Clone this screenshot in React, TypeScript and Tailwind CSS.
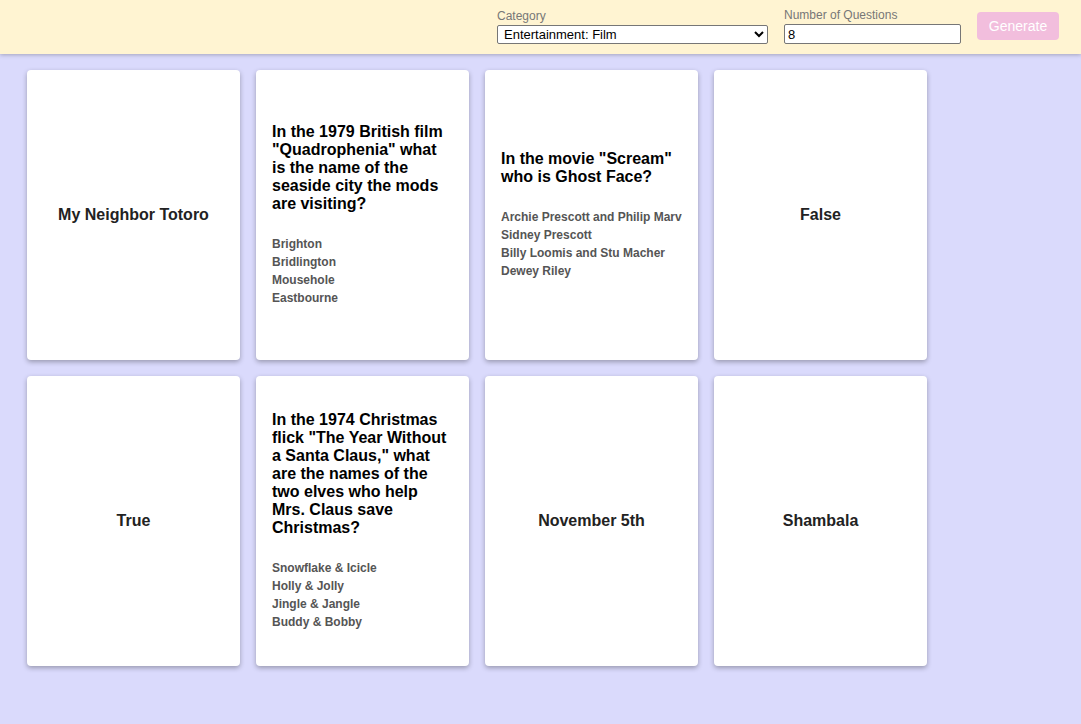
import React from "react";

type Card =
  | { kind: "answer"; text: string }
  | { kind: "question"; question: string; answers: string[] };

const cards: Card[] = [
  { kind: "answer", text: "My Neighbor Totoro" },
  {
    kind: "question",
    question:
      'In the 1979 British film "Quadrophenia" what is the name of the seaside city the mods are visiting?',
    answers: ["Brighton", "Bridlington", "Mousehole", "Eastbourne"],
  },
  {
    kind: "question",
    question: 'In the movie "Scream" who is Ghost Face?',
    answers: [
      "Archie Prescott and Philip Marvin",
      "Sidney Prescott",
      "Billy Loomis and Stu Macher",
      "Dewey Riley",
    ],
  },
  { kind: "answer", text: "False" },
  { kind: "answer", text: "True" },
  {
    kind: "question",
    question:
      'In the 1974 Christmas flick "The Year Without a Santa Claus," what are the names of the two elves who help Mrs. Claus save Christmas?',
    answers: ["Snowflake & Icicle", "Holly & Jolly", "Jingle & Jangle", "Buddy & Bobby"],
  },
  { kind: "answer", text: "November 5th" },
  { kind: "answer", text: "Shambala" },
];

export default function App() {
  return (
    <div className="min-h-screen bg-[#dadafc] font-['Liberation_Sans',Arial,sans-serif]">
      {/* Header */}
      <header className="relative z-10 flex h-[54px] items-center justify-end gap-4 bg-[#fff4d2] pr-[22px] pb-[2px] shadow-[0_1px_4px_rgba(0,0,0,0.25)]">
        <div className="flex flex-col">
          <label htmlFor="category" className="mb-[2px] text-[12px] leading-[14px] text-[#777]">
            Category
          </label>
          <select
            id="category"
            defaultValue="film"
            className="h-[19px] w-[271px] rounded-[2px] border border-[#767676] bg-white px-[2px] text-[13px] leading-[15px] text-black"
          >
            <option value="film">Entertainment: Film</option>
          </select>
        </div>
        <div className="flex flex-col">
          <label htmlFor="count" className="mb-[2px] text-[12px] leading-[14px] text-[#777]">
            Number of Questions
          </label>
          <input
            id="count"
            type="number"
            defaultValue={8}
            className="h-[20px] w-[177px] rounded-[2px] border border-[#767676] bg-white px-[3px] text-[13px] leading-[15px] text-black"
          />
        </div>
        <button
          type="button"
          className="h-[28px] w-[82px] rounded-[4px] bg-[#f2bedd] text-[14px] text-white"
        >
          Generate
        </button>
      </header>

      {/* Cards */}
      <main className="grid grid-cols-[repeat(4,213px)] gap-4 px-[27px] pt-4 pb-4">
        {cards.map((card, i) => (
          <div
            key={i}
            className="flex h-[290px] flex-col justify-center overflow-hidden rounded-[4px] bg-white p-4 shadow-[0_2px_5px_rgba(0,0,0,0.3)]"
          >
            {card.kind === "answer" ? (
              <p className="text-center text-[16px] font-bold leading-[18px] text-[#222]">
                {card.text}
              </p>
            ) : (
              <>
                <p className="text-[16px] font-bold leading-[18px] text-black">{card.question}</p>
                <ul className="mt-[22px]">
                  {card.answers.map((a) => (
                    <li
                      key={a}
                      className="overflow-hidden whitespace-nowrap text-[12px] font-bold leading-[18px] text-[#555]"
                    >
                      {a}
                    </li>
                  ))}
                </ul>
              </>
            )}
          </div>
        ))}
      </main>
    </div>
  );
}
